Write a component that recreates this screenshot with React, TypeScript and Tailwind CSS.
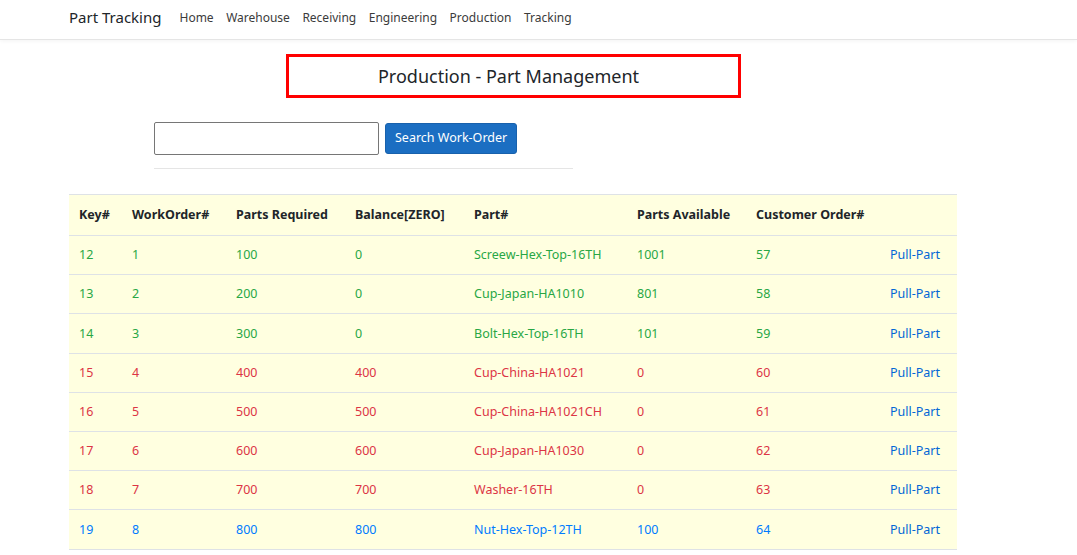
import React from "react";

type Status = "ok" | "short" | "partial";

interface PartRow {
  key: number;
  workOrder: number;
  required: number;
  balance: number;
  part: string;
  available: number;
  customerOrder: number;
  status: Status;
}

const ROWS: PartRow[] = [
  { key: 12, workOrder: 1, required: 100, balance: 0, part: "Screew-Hex-Top-16TH", available: 1001, customerOrder: 57, status: "ok" },
  { key: 13, workOrder: 2, required: 200, balance: 0, part: "Cup-Japan-HA1010", available: 801, customerOrder: 58, status: "ok" },
  { key: 14, workOrder: 3, required: 300, balance: 0, part: "Bolt-Hex-Top-16TH", available: 101, customerOrder: 59, status: "ok" },
  { key: 15, workOrder: 4, required: 400, balance: 400, part: "Cup-China-HA1021", available: 0, customerOrder: 60, status: "short" },
  { key: 16, workOrder: 5, required: 500, balance: 500, part: "Cup-China-HA1021CH", available: 0, customerOrder: 61, status: "short" },
  { key: 17, workOrder: 6, required: 600, balance: 600, part: "Cup-Japan-HA1030", available: 0, customerOrder: 62, status: "short" },
  { key: 18, workOrder: 7, required: 700, balance: 700, part: "Washer-16TH", available: 0, customerOrder: 63, status: "short" },
  { key: 19, workOrder: 8, required: 800, balance: 800, part: "Nut-Hex-Top-12TH", available: 100, customerOrder: 64, status: "partial" },
];

const STATUS_COLOR: Record<Status, string> = {
  ok: "text-[#28a745]",
  short: "text-[#dc3545]",
  partial: "text-[#007bff]",
};

const NAV_LINKS = ["Home", "Warehouse", "Receiving", "Engineering", "Production", "Tracking"];

const HEADERS = ["Key#", "WorkOrder#", "Parts Required", "Balance[ZERO]", "Part#", "Parts Available", "Customer Order#", ""];
const COL_WIDTHS = ["w-[53px]", "w-[104px]", "w-[119px]", "w-[119px]", "w-[163px]", "w-[119px]", "w-[136px]", "w-[75px]"];

export default function App() {
  return (
    <div className="min-h-screen bg-white text-[#212529] font-['Noto_Sans',sans-serif]">
      {/* Top nav */}
      <nav className="flex h-[40px] items-center border-b border-[#e5e5e5] pb-[5px] pl-[69px] shadow-[0_1px_4px_rgba(0,0,0,0.05)]">
        <span className="mr-[18px] text-[15px] text-[#212529]">Part Tracking</span>
        <div className="flex items-center gap-[12.5px] pt-[1px] text-[12px] text-[#3b3b3b]">
          {NAV_LINKS.map((l) => (
            <span key={l}>{l}</span>
          ))}
        </div>
      </nav>

      <div className="ml-[69px] w-[888px]">
        {/* Title */}
        <div className="mx-auto mt-[14px] flex h-[44px] w-[455px] items-center justify-center border-[3px] border-[#ff0000] pr-[9px]">
          <span className="text-[18px] text-[#212529]">Production - Part Management</span>
        </div>

        {/* Search */}
        <div className="ml-[85px] mt-[24px] w-[419px]">
          <div className="flex items-center gap-[6px]">
            <input
              type="text"
              className="h-[33px] w-[225px] rounded-[2px] border border-[#767676] bg-white px-2 text-[13px] outline-none"
            />
            <button
              type="button"
              className="h-[31px] rounded-[3px] border border-[#1861ac] bg-[#1b6ec2] px-[9px] text-[12.5px] text-white"
            >
              Search Work-Order
            </button>
          </div>
          <hr className="mt-[13px] border-t border-[#e5e5e5]" />
        </div>

        {/* Parts table */}
        <table className="mt-[25px] w-full table-fixed border-collapse bg-[#ffffe0] text-[12.5px]">
          <thead>
            <tr className="h-[41px] border-y border-[#dee2e6]">
              {HEADERS.map((h, i) => (
                <th key={i} className={`${COL_WIDTHS[i]} whitespace-nowrap px-[10px] pt-[1px] text-left font-bold text-[#212529]`}>
                  {h}
                </th>
              ))}
            </tr>
          </thead>
          <tbody>
            {ROWS.map((r) => {
              const c = STATUS_COLOR[r.status];
              return (
                <tr key={r.key} className={`h-[39.2px] border-b border-[#dee2e6] ${c}`}>
                  <td className="px-[10px] pt-[1px]">{r.key}</td>
                  <td className="px-[10px] pt-[1px]">{r.workOrder}</td>
                  <td className="px-[10px] pt-[1px]">{r.required}</td>
                  <td className="px-[10px] pt-[1px]">{r.balance}</td>
                  <td className="whitespace-nowrap px-[10px] pt-[1px]">{r.part}</td>
                  <td className="px-[10px] pt-[1px]">{r.available}</td>
                  <td className="px-[10px] pt-[1px]">{r.customerOrder}</td>
                  <td className="whitespace-nowrap pr-[17px] pt-[1px] text-right text-[#0366d6]">Pull-Part</td>
                </tr>
              );
            })}
          </tbody>
        </table>
      </div>
    </div>
  );
}
